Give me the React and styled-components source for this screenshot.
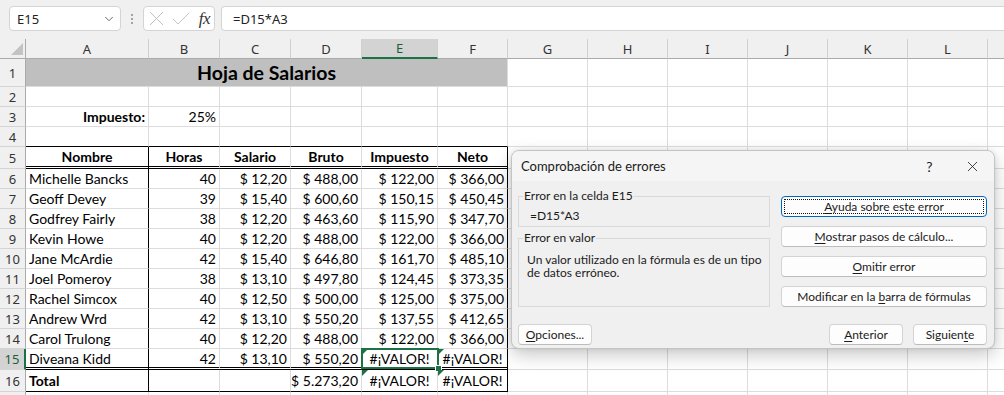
import { styled, createGlobalStyle } from 'styled-components'
import { ChevronDown, X, Check } from 'lucide-react'

const GRID = '#dcdcdc'
const GREEN = '#1e7145'
const UI_FONT = "'Noto Sans', 'Open Sans', sans-serif"
const DIALOG_FONT = "Lato, 'Noto Sans', sans-serif"
const SHEET_FONT = "Lato, 'Liberation Sans', sans-serif"

const GlobalStyle = createGlobalStyle`
  html, body {
    margin: 0;
    background: #fff;
    overflow: hidden;
  }
  #root {
    width: 1004px;
    height: 395px;
    overflow: hidden;
  }
`

const COLS = [
  { l: 'A', w: 123 },
  { l: 'B', w: 71 },
  { l: 'C', w: 71 },
  { l: 'D', w: 71 },
  { l: 'E', w: 76 },
  { l: 'F', w: 70 },
  { l: 'G', w: 80 },
  { l: 'H', w: 80 },
  { l: 'I', w: 80 },
  { l: 'J', w: 80 },
  { l: 'K', w: 80 },
  { l: 'L', w: 80 },
  { l: 'M', w: 80 },
]

const people = [
  ['Michelle Bancks', '40', '12,20', '488,00', '122,00', '366,00'],
  ['Geoff Devey', '39', '15,40', '600,60', '150,15', '450,45'],
  ['Godfrey Fairly', '38', '12,20', '463,60', '115,90', '347,70'],
  ['Kevin Howe', '40', '12,20', '488,00', '122,00', '366,00'],
  ['Jane McArdie', '42', '15,40', '646,80', '161,70', '485,10'],
  ['Joel Pomeroy', '38', '13,10', '497,80', '124,45', '373,35'],
  ['Rachel Simcox', '40', '12,50', '500,00', '125,00', '375,00'],
  ['Andrew Wrd', '42', '13,10', '550,20', '137,55', '412,65'],
  ['Carol Trulong', '40', '12,20', '488,00', '122,00', '366,00'],
]

const ERR = '#¡VALOR!'
const money = (v) => `$ ${v}`

// each row: height, bottom border of the table cells, cells A-F
const rows = [
  { n: 1, h: 28, title: 'Hoja de Salarios' },
  { n: 2, h: 20, cells: [] },
  { n: 3, h: 20, cells: [{ t: 'Impuesto:', a: 'right', b: true }, { t: '25%', a: 'right' }] },
  { n: 4, h: 20, cells: [], bottom: 'single' },
  {
    n: 5, h: 22, bottom: 'double', framed: true,
    cells: ['Nombre', 'Horas', 'Salario', 'Bruto', 'Impuesto', 'Neto'].map((t) => ({ t, a: 'center', b: true })),
  },
  ...people.map((p, i) => ({
    n: 6 + i, h: 20, framed: true,
    cells: [
      { t: p[0] },
      { t: p[1], a: 'right' },
      ...p.slice(2).map((v) => ({ t: money(v), a: 'right' })),
    ],
  })),
  {
    n: 15, h: 21, bottom: 'double', framed: true, active: true,
    cells: [
      { t: 'Diveana Kidd' },
      { t: '42', a: 'right' },
      { t: money('13,10'), a: 'right' },
      { t: money('550,20'), a: 'right' },
      { t: ERR, a: 'center', flag: true, selected: true },
      { t: ERR, a: 'center', flag: true },
    ],
  },
  {
    n: 16, h: 22, bottom: 'single', framed: true,
    cells: [
      { t: 'Total', b: true },
      {},
      {},
      { t: money('5.273,20'), a: 'right' },
      { t: ERR, a: 'center', flag: true },
      { t: ERR, a: 'center', flag: true },
    ],
  },
  { n: 17, h: 20, cells: [] },
]

const Page = styled.div`
  position: relative;
  width: 1004px;
  height: 395px;
  overflow: hidden;
  background: #fff;
`

const FormulaBar = styled.div`
  height: 39px;
  box-sizing: border-box;
  padding: 6px 0 0 9px;
  background: #f0f0f0;
  display: flex;
  align-items: flex-start;
  font-family: ${UI_FONT};
`

const Box = styled.div`
  box-sizing: border-box;
  height: 25px;
  background: #fff;
  border: 1px solid #d4d4d4;
  border-radius: 4px;
  display: flex;
  align-items: center;
  flex: none;
`

const NameBox = styled(Box)`
  width: 112px;
  padding: 0 4px 0 7px;
  justify-content: space-between;
  font-size: 13px;
  color: #222;
`

const Dots = styled.div`
  width: 22px;
  height: 25px;
  display: flex;
  flex-direction: column;
  align-items: center;
  justify-content: center;
  gap: 2px;
  flex: none;
  span {
    width: 2px;
    height: 2px;
    border-radius: 1px;
    background: #8a8a8a;
  }
`

const FxBox = styled(Box)`
  width: 72px;
  padding: 0 4px 0 0;
  color: #bdbdbd;
  svg {
    flex: none;
  }
`

const Fx = styled.span`
  margin-left: auto;
  font: italic 17px 'Liberation Serif', 'DejaVu Serif', serif;
  color: #333;
  letter-spacing: -0.5px;
`

const FormulaInput = styled(Box)`
  margin-left: 6px;
  flex: 1;
  border-right: none;
  border-radius: 4px 0 0 4px;
  padding-left: 11px;
  font-size: 13px;
  color: #222;
`

const Grid = styled.div`
  display: flex;
  flex-direction: column;
  font-family: ${SHEET_FONT};
`

const Row = styled.div`
  display: flex;
  height: ${(p) => p.$h}px;
  flex: none;
`

const Corner = styled.div`
  position: relative;
  flex: none;
  width: 26px;
  box-sizing: border-box;
  background: #f0f0f0;
  border-right: 1px solid #ababab;
  border-bottom: 1px solid #ababab;
  display: flex;
  align-items: flex-end;
  justify-content: flex-end;
  padding: 0 2px 3px 0;
`

const ColHead = styled.div`
  flex: none;
  width: ${(p) => p.$w}px;
  box-sizing: border-box;
  background: ${(p) => (p.$active ? '#d3d3d3' : '#f0f0f0')};
  border-right: 1px solid #cfcfcf;
  border-bottom: ${(p) => (p.$active ? `2px solid ${GREEN}` : '1px solid #ababab')};
  display: flex;
  align-items: center;
  justify-content: center;
  font: 13px ${UI_FONT};
  color: ${(p) => (p.$active ? '#1d5d3c' : '#333')};
`

const RowHead = styled.div`
  flex: none;
  width: 26px;
  box-sizing: border-box;
  background: ${(p) => (p.$active ? '#d3d3d3' : '#f0f0f0')};
  border-right: ${(p) => (p.$active ? `2px solid ${GREEN}` : '1px solid #ababab')};
  border-bottom: 1px solid #d4d4d4;
  display: flex;
  align-items: center;
  justify-content: center;
  font: 13px ${UI_FONT};
  color: ${(p) => (p.$active ? '#1d5d3c' : '#333')};
`

const bottomBorder = (b) =>
  b === 'double' ? '3px double #000' : b === 'single' ? '1px solid #000' : `1px solid ${GRID}`

const Cell = styled.div`
  position: relative;
  flex: none;
  width: ${(p) => p.$w}px;
  box-sizing: border-box;
  padding: 0 3px 0 3px;
  display: flex;
  align-items: center;
  justify-content: ${(p) => (p.$a === 'right' ? 'flex-end' : p.$a === 'center' ? 'center' : 'flex-start')};
  border-right: 1px solid ${(p) => (p.$edge ? '#000' : GRID)};
  border-bottom: ${(p) => bottomBorder(p.$bottom)};
  background: ${(p) => p.$fill || '#fff'};
  font-size: ${(p) => (p.$big ? 19.5 : 14)}px;
  font-weight: ${(p) => (p.$b ? 700 : 400)};
  color: #000;
  white-space: nowrap;
`

const Flag = styled.span`
  position: absolute;
  top: 0;
  left: 0;
  width: 0;
  height: 0;
  border-top: 6px solid ${GREEN};
  border-right: 6px solid transparent;
  z-index: 2;
`

const Selection = styled.span`
  position: absolute;
  left: -1px;
  top: -1px;
  right: -2px;
  bottom: -2px;
  border: 2px solid ${GREEN};
  pointer-events: none;
  z-index: 1;
  &::after {
    content: '';
    position: absolute;
    right: -5px;
    bottom: -5px;
    width: 5px;
    height: 5px;
    background: ${GREEN};
    border: 1px solid #fff;
  }
`

const Dialog = styled.div`
  position: absolute;
  left: 511px;
  top: 150px;
  width: 484px;
  height: 199px;
  box-sizing: border-box;
  background: #f0f0f0;
  border: 1px solid #c4c4c4;
  border-radius: 8px;
  box-shadow: 0 6px 18px rgba(0, 0, 0, 0.22), 0 0 4px rgba(0, 0, 0, 0.08);
  display: flex;
  flex-direction: column;
  font-family: ${DIALOG_FONT};
  font-size: 12px;
  color: #1b1b1b;
  overflow: hidden;
`

const TitleBar = styled.div`
  height: 30px;
  flex: none;
  display: flex;
  align-items: center;
  padding-left: 9px;
  background: #f5f5f5;
  font-size: 13px;
`

const TitleText = styled.div`
  flex: 1;
`

const WinButton = styled.div`
  width: 43px;
  height: 30px;
  display: flex;
  align-items: center;
  justify-content: center;
  font-size: 14px;
  color: #222;
`

const Body = styled.div`
  flex: 1;
  display: grid;
  grid-template-columns: 252px 206px;
  grid-template-rows: auto auto;
  column-gap: 11px;
  padding: 8px 8px 0 6px;
`

const LeftCol = styled.div`
  display: flex;
  flex-direction: column;
  gap: 4px;
`

const Group = styled.fieldset`
  margin: 0;
  box-sizing: border-box;
  height: ${(p) => p.$h}px;
  border: 1px solid #d9d9d9;
  padding: 0;
  line-height: 13px;
  legend {
    padding: 0 1px;
    margin-left: 4px;
    line-height: 14px;
  }
`

const GroupText = styled.div`
  padding: ${(p) => p.$pt}px 0 0 ${(p) => p.$pl}px;
  white-space: nowrap;
`

const RightCol = styled.div`
  display: flex;
  flex-direction: column;
  gap: 9px;
  padding-top: 7px;
`

const Btn = styled.div`
  box-sizing: border-box;
  height: 21px;
  width: ${(p) => (p.$w ? `${p.$w}px` : '100%')};
  background: #fdfdfd;
  border: 1px solid ${(p) => (p.$focus ? '#0067c0' : '#d3d3d3')};
  border-bottom-color: ${(p) => (p.$focus ? '#0067c0' : '#bcbcbc')};
  border-radius: 4px;
  display: flex;
  align-items: center;
  justify-content: center;
  outline: ${(p) => (p.$focus ? '1px dotted #111' : 'none')};
  outline-offset: -4px;
  u {
    text-underline-offset: 2px;
  }
`

const Footer = styled.div`
  grid-column: 1 / -1;
  display: flex;
  justify-content: space-between;
  padding-top: 13px;
`

const FooterRight = styled.div`
  display: flex;
  gap: 10px;
`

function Sheet() {
  return (
    <Grid>
      <Row $h={20}>
        <Corner>
          <svg width="12" height="12" viewBox="0 0 12 12">
            <polygon points="12,0 12,12 0,12" fill="#c3c3c3" />
          </svg>
        </Corner>
        {COLS.map((c) => (
          <ColHead key={c.l} $w={c.w} $active={c.l === 'E'}>
            {c.l}
          </ColHead>
        ))}
      </Row>
      {rows.map((r) => (
        <Row key={r.n} $h={r.h}>
          <RowHead $active={r.active}>{r.n}</RowHead>
          {r.title ? (
            <Cell $w={482} $a="center" $fill="#bfbfbf" $b $big>
              {r.title}
            </Cell>
          ) : (
            COLS.slice(0, 6).map((c, i) => {
              const cell = r.cells[i] || {}
              return (
                <Cell
                  key={c.l}
                  $w={c.w}
                  $a={cell.a}
                  $b={cell.b}
                  $bottom={r.bottom}
                  $edge={r.framed && (i === 0 || i === 5)}
                >
                  {cell.flag && <Flag />}
                  {cell.selected && <Selection />}
                  {cell.t}
                </Cell>
              )
            })
          )}
          {COLS.slice(6).map((c) => (
            <Cell key={c.l} $w={c.w} />
          ))}
        </Row>
      ))}
    </Grid>
  )
}

function ErrorDialog() {
  return (
    <Dialog>
      <TitleBar>
        <TitleText>Comprobación de errores</TitleText>
        <WinButton>?</WinButton>
        <WinButton>
          <X size={17} strokeWidth={1.2} />
        </WinButton>
      </TitleBar>
      <Body>
        <LeftCol>
          <Group $h={38}>
            <legend>Error en la celda E15</legend>
            <GroupText $pt={6} $pl={11}>=D15*A3</GroupText>
          </Group>
          <Group $h={76}>
            <legend>Error en valor</legend>
            <GroupText $pt={8} $pl={8}>
              Un valor utilizado en la fórmula es de un tipo
              <br />
              de datos erróneo.
            </GroupText>
          </Group>
        </LeftCol>
        <RightCol>
          <Btn $focus>
            <span>
              <u>A</u>yuda sobre este error
            </span>
          </Btn>
          <Btn>
            <span>
              <u>M</u>ostrar pasos de cálculo...
            </span>
          </Btn>
          <Btn>
            <span>
              <u>O</u>mitir error
            </span>
          </Btn>
          <Btn>
            <span>
              Modificar en la <u>b</u>arra de fórmulas
            </span>
          </Btn>
        </RightCol>
        <Footer>
          <Btn $w={74}>
            <span>
              <u>O</u>pciones...
            </span>
          </Btn>
          <FooterRight>
            <Btn $w={74}>
              <span>
                <u>A</u>nterior
              </span>
            </Btn>
            <Btn $w={74}>
              <span>
                Siguien<u>t</u>e
              </span>
            </Btn>
          </FooterRight>
        </Footer>
      </Body>
    </Dialog>
  )
}

export default function App() {
  return (
    <Page>
      <GlobalStyle />
      <FormulaBar>
        <NameBox>
          E15
          <ChevronDown size={14} strokeWidth={1.5} color="#555" />
        </NameBox>
        <Dots>
          <span />
          <span />
          <span />
        </Dots>
        <FxBox>
          <X size={25} strokeWidth={0.9} />
          <Check size={24} strokeWidth={0.9} />
          <Fx>fx</Fx>
        </FxBox>
        <FormulaInput>=D15*A3</FormulaInput>
      </FormulaBar>
      <Sheet />
      <ErrorDialog />
    </Page>
  )
}
